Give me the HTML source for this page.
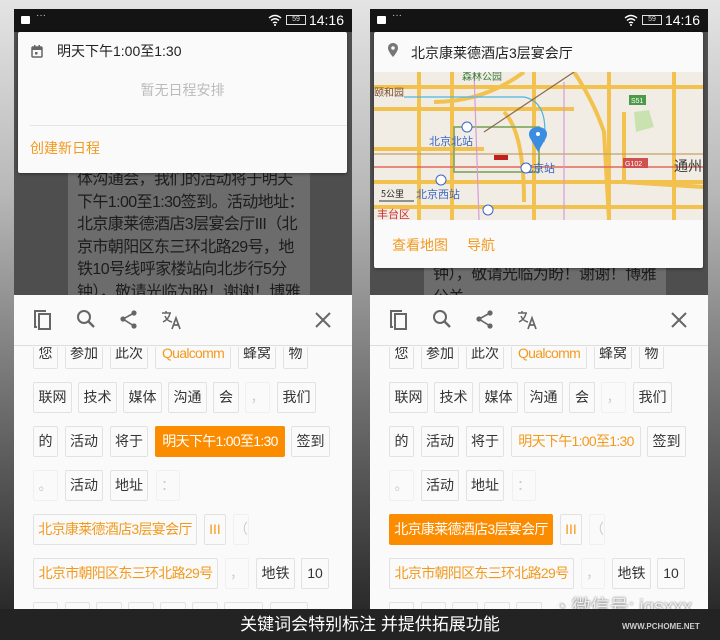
<!DOCTYPE html>
<html><head><meta charset="utf-8">
<style>
*{margin:0;padding:0;box-sizing:border-box}
body{width:720px;height:640px;overflow:hidden;position:relative;font-family:"Liberation Sans","Noto Sans CJK SC",sans-serif;background:linear-gradient(#e4e4e4 0%,#b8b8b8 30%,#6a6a6a 65%,#2a2a2a 95%,#222 100%)}
.ph{position:absolute;top:9px;width:338px;height:600px;background:#4e4e4e;overflow:hidden}
.sb{position:absolute;left:0;top:0;width:338px;height:23px;background:#141414;color:#fff}
.sb .t{position:absolute;right:8px;top:3px;font-size:14px}
.sb .bat{position:absolute;right:46px;top:6px;width:20px;height:10px;border:1px solid #ddd;font-size:7px;line-height:8px;text-align:center;color:#ddd}
.sb .ic1{position:absolute;left:7px;top:7px;width:9px;height:8px;background:#fff;border-radius:1px}
.sb .dots{position:absolute;left:22px;top:1px;font-size:10px;color:#ccc}
.bub{position:absolute;left:54px;top:40px;width:242px;height:250px;background:#6c6c6c;color:#1c1c1c;font-size:16px;line-height:22.5px;padding:0 0 0 9px;white-space:nowrap;letter-spacing:-0.6px;overflow:hidden}
.card{position:absolute;left:4px;top:23px;width:329px;background:#fafafa;box-shadow:0 1px 3px rgba(0,0,0,.4);border-radius:2px}
.sheet{position:absolute;left:0;top:286px;width:338px;height:314px;background:#fafafa}
.tb{position:absolute;left:0;top:0;width:338px;height:51px;border-bottom:1.5px solid #ddd;background:#fafafa;z-index:2}
.tb svg{position:absolute;top:14px}
.c{position:absolute;height:31px;border:1.5px solid #e2e2e2;border-radius:2px;background:#fafafa;font-size:14px;color:#333;text-align:center;line-height:28px;white-space:nowrap;overflow:hidden}
.c.f{color:#ccc;border-color:#f0f0f0}
.c.o{color:#f39a1e}
.c.on{background:#fb8c00;border-color:#fb8c00;color:#fff}
.n{letter-spacing:-0.7px}
.cap{position:absolute;left:0;top:609px;width:720px;height:31px;background:#232323;color:#fff;font-size:17px;text-align:center;line-height:31px;padding-left:20px}
.or{color:#f39a1e}
</style></head><body>

<!-- LEFT PHONE -->
<div class="ph" style="left:14px">
 <div class="sb"><div class="ic1"></div><div class="dots">···</div>
  <svg style="position:absolute;right:70px;top:5px" width="14" height="12" viewBox="0 0 14 12"><path d="M1 4 Q7 -1 13 4 M3 6.5 Q7 3 11 6.5 M5 9 Q7 7.5 9 9" stroke="#fff" stroke-width="1.4" fill="none"/><circle cx="7" cy="11" r="1" fill="#fff"/></svg>
  <div class="bat">59</div><div class="t">14:16</div></div>
 <div class="bub" style="top:40px;padding-top:120px">体沟通会，我们的活动将于明天<br>下午1:00至1:30签到。活动地址：<br>北京康莱德酒店3层宴会厅III（北<br>京市朝阳区东三环北路29号，地<br>铁10号线呼家楼站向北步行5分<br>钟），敬请光临为盼！谢谢！博雅<br>公关</div>
 <div class="card" style="height:141px">
  <svg style="position:absolute;left:13px;top:13px" width="12" height="13" viewBox="0 0 12 13"><rect x="1" y="2" width="10" height="10" rx="1" fill="none" stroke="#666" stroke-width="1.5"/><rect x="1" y="2" width="10" height="3" fill="#666"/><rect x="3" y="0" width="1.5" height="3" fill="#666"/><rect x="7.5" y="0" width="1.5" height="3" fill="#666"/><rect x="4" y="7" width="2.5" height="2.5" fill="#666"/></svg>
  <div style="position:absolute;left:39px;top:9px;font-size:14px;color:#222">明天下午1:00至1:30</div>
  <div style="position:absolute;left:0;width:329px;top:48px;text-align:center;font-size:14px;color:#bbb">暂无日程安排</div>
  <div style="position:absolute;left:12px;right:0;top:93px;height:1px;background:#e4e4e4"></div>
  <div style="position:absolute;left:12px;top:106px;font-size:14px" class="or">创建新日程</div>
 </div>
 <div class="sheet">
  <div class="tb">
   <svg style="left:19px" width="20" height="22" viewBox="0 0 20 22"><path d="M2 4 V18 H4" stroke="#666" stroke-width="2" fill="none"/><rect x="6" y="5" width="11" height="15" fill="none" stroke="#666" stroke-width="2"/><path d="M2 4 V2 H13" stroke="#666" stroke-width="2" fill="none"/></svg>
   <svg style="left:62px" width="20" height="22" viewBox="0 0 20 22"><circle cx="8" cy="8" r="6" fill="none" stroke="#666" stroke-width="2"/><path d="M12.5 12.5 L18 18" stroke="#666" stroke-width="2.4"/></svg>
   <svg style="left:105px" width="20" height="22" viewBox="0 0 20 22"><circle cx="15" cy="4" r="2.6" fill="#666"/><circle cx="4" cy="10" r="2.6" fill="#666"/><circle cx="15" cy="17" r="2.6" fill="#666"/><path d="M15 4 L4 10 L15 17" stroke="#666" stroke-width="1.6" fill="none"/></svg>
   <svg style="left:147px" width="22" height="22" viewBox="0 0 22 22"><path d="M1 4 H10 M5 2 V4 M2 13 Q8 10 9 4 M4 7 Q6 12 11 13" stroke="#666" stroke-width="1.5" fill="none"/><path d="M11 20 L15 9 L19 20 M12.5 16 H17.5" stroke="#666" stroke-width="1.7" fill="none"/></svg>
   <svg style="left:300px;top:16px" width="18" height="18" viewBox="0 0 18 18"><path d="M2 2 L16 16 M16 2 L2 16" stroke="#666" stroke-width="2"/></svg>
  </div>
  <div style="position:absolute;left:0;top:52px;width:338px;height:262px;overflow:hidden">
   <div style="position:absolute;left:0;top:-52px;width:338px;height:320px">
    <div class="c" style="left:19px;top:43px;width:25px">您</div>
    <div class="c" style="left:51px;top:43px;width:38px">参加</div>
    <div class="c" style="left:96px;top:43px;width:38px">此次</div>
    <div class="c o n" style="left:141px;top:43px;width:76px">Qualcomm</div>
    <div class="c" style="left:224px;top:43px;width:38px">蜂窝</div>
    <div class="c" style="left:269px;top:43px;width:25px">物</div>
    <div class="c" style="left:19px;top:87px;width:39px">联网</div>
    <div class="c" style="left:64px;top:87px;width:39px">技术</div>
    <div class="c" style="left:109px;top:87px;width:39px">媒体</div>
    <div class="c" style="left:154px;top:87px;width:39px">沟通</div>
    <div class="c" style="left:199px;top:87px;width:26px">会</div>
    <div class="c f" style="left:231px;top:87px;width:25px">，</div>
    <div class="c" style="left:263px;top:87px;width:39px">我们</div>
    <div class="c" style="left:19px;top:131px;width:25px">的</div>
    <div class="c" style="left:51px;top:131px;width:38px">活动</div>
    <div class="c" style="left:96px;top:131px;width:38px">将于</div>
    <div class="c on n" style="left:141px;top:131px;width:130px">明天下午1:00至1:30</div>
    <div class="c" style="left:277px;top:131px;width:39px">签到</div>
    <div class="c f" style="left:19px;top:175px;width:25px">。</div>
    <div class="c" style="left:51px;top:175px;width:38px">活动</div>
    <div class="c" style="left:96px;top:175px;width:38px">地址</div>
    <div class="c f" style="left:142px;top:175px;width:24px">：</div>
    <div class="c o n" style="left:19px;top:219px;width:164px">北京康莱德酒店3层宴会厅</div>
    <div class="c o" style="left:190px;top:219px;width:22px">III</div>
    <div class="c f" style="left:219px;top:219px;width:16px">（</div>
    <div class="c o n" style="left:19px;top:263px;width:185px">北京市朝阳区东三环北路29号</div>
    <div class="c f" style="left:211px;top:263px;width:24px">，</div>
    <div class="c" style="left:242px;top:263px;width:39px">地铁</div>
    <div class="c" style="left:287px;top:263px;width:28px">10</div>
    <div class="c" style="left:19px;top:307px;width:25px"></div><div class="c" style="left:51px;top:307px;width:25px"></div><div class="c" style="left:82px;top:307px;width:26px"></div><div class="c" style="left:114px;top:307px;width:26px"></div><div class="c" style="left:146px;top:307px;width:26px"></div><div class="c" style="left:178px;top:307px;width:26px"></div><div class="c" style="left:210px;top:307px;width:39px"></div><div class="c" style="left:256px;top:307px;width:38px"></div>
   </div>
  </div>
 </div>
</div>

<!-- RIGHT PHONE -->
<div class="ph" style="left:370px">
 <div class="sb"><div class="ic1"></div><div class="dots">···</div>
  <svg style="position:absolute;right:70px;top:5px" width="14" height="12" viewBox="0 0 14 12"><path d="M1 4 Q7 -1 13 4 M3 6.5 Q7 3 11 6.5 M5 9 Q7 7.5 9 9" stroke="#fff" stroke-width="1.4" fill="none"/><circle cx="7" cy="11" r="1" fill="#fff"/></svg>
  <div class="bat">59</div><div class="t">14:16</div></div>
 <div class="bub" style="top:40px;padding-top:215px">钟），敬请光临为盼！谢谢！博雅<br>公关</div>
 <div class="card" style="height:236px">
  <svg style="position:absolute;left:14px;top:11px" width="10" height="14" viewBox="0 0 10 14"><path d="M5 0 C2 0 0 2.2 0 5 C0 8.5 5 14 5 14 C5 14 10 8.5 10 5 C10 2.2 8 0 5 0 Z" fill="#777"/><circle cx="5" cy="5" r="1.8" fill="#fafafa"/></svg>
  <div style="position:absolute;left:37px;top:11px;font-size:14px;color:#222">北京康莱德酒店3层宴会厅</div>
  <svg style="position:absolute;left:0;top:40px" width="329" height="148" viewBox="0 0 329 148">
   <rect width="329" height="148" fill="#f1ede4"/>
   <path d="M260 40 L275 38 L280 55 L262 60 Z" fill="#c9e2b0"/>
   <g stroke="#f2c14e" stroke-width="4" fill="none">
    <path d="M0 15 H329"/><path d="M0 37 H200"/><path d="M0 77 H110"/><path d="M0 110 H329"/><path d="M0 135 H329"/>
    <path d="M45 0 V148"/><path d="M78 0 V148"/><path d="M160 0 V148"/><path d="M235 0 V148"/><path d="M300 0 V148"/>
    <path d="M150 0 Q110 30 60 30"/><path d="M200 0 Q220 30 230 60 L235 148"/>
    <path d="M130 40 Q150 60 150 130"/><path d="M250 40 V110 L330 115"/>
   </g>
   <path d="M0 95 H329" stroke="#e0685a" stroke-width="1.5"/>
   <path d="M0 82 H329" stroke="#c8a06a" stroke-width="1.2"/>
   <path d="M80 55 H165 V100 H80 Z" stroke="#88aa66" stroke-width="1.8" fill="none"/>
   <path d="M30 25 H150 Q175 30 170 70" stroke="#4bb7e0" stroke-width="1.2" fill="none"/>
   <path d="M100 0 L105 148 M190 10 V148" stroke="#d89bd6" stroke-width="1.2"/>
   <path d="M110 60 L200 0" stroke="#8a6a4a" stroke-width="1.2"/>
   <rect x="255" y="23" width="17" height="10" fill="#4a9a4a"/><text x="257" y="31" font-size="7" fill="#fff" font-family="Liberation Sans">S51</text>
   <rect x="249" y="86" width="25" height="10" fill="#d05050"/><text x="251" y="94" font-size="7" fill="#fff" font-family="Liberation Sans">G102</text>
   <text x="88" y="8" font-size="10" fill="#3a7a3a" font-family="Noto Sans CJK SC">森林公园</text>
   <text x="0" y="24" font-size="10" fill="#7a4a2a" font-family="Noto Sans CJK SC">颐和园</text>
   <text x="55" y="73" font-size="11" fill="#3a66c8" font-family="Noto Sans CJK SC">北京北站</text>
   <text x="148" y="100" font-size="11" fill="#3a66c8" font-family="Noto Sans CJK SC">北京站</text>
   <text x="42" y="126" font-size="11" fill="#3a66c8" font-family="Noto Sans CJK SC">北京西站</text>
   <text x="300" y="99" font-size="14" fill="#333" font-family="Noto Sans CJK SC">通州</text>
   <text x="7" y="125" font-size="9" fill="#222" font-family="Noto Sans CJK SC">5公里</text>
   <path d="M5 129 H40" stroke="#333" stroke-width="1"/>
   <text x="3" y="146" font-size="11" fill="#d03030" font-family="Noto Sans CJK SC">丰台区</text>
   <rect x="120" y="83" width="14" height="5" fill="#c02020"/>
   <circle cx="93" cy="55" r="5" fill="#fff" stroke="#3a66c8"/><circle cx="152" cy="96" r="5" fill="#fff" stroke="#3a66c8"/><circle cx="67" cy="108" r="5" fill="#fff" stroke="#3a66c8"/><circle cx="114" cy="138" r="5" fill="#fff" stroke="#3a66c8"/>
   <path d="M164 55 C157 55 153 60 156 66 L164 80 L172 66 C175 60 171 55 164 55 Z" fill="#3a8de0"/><circle cx="164" cy="62" r="2" fill="#fff"/>
  </svg>
  <div style="position:absolute;left:18px;top:203px;font-size:14px" class="or">查看地图</div>
  <div style="position:absolute;left:93px;top:203px;font-size:14px" class="or">导航</div>
 </div>
 <div class="sheet">
  <div class="tb">
   <svg style="left:19px" width="20" height="22" viewBox="0 0 20 22"><path d="M2 4 V18 H4" stroke="#666" stroke-width="2" fill="none"/><rect x="6" y="5" width="11" height="15" fill="none" stroke="#666" stroke-width="2"/><path d="M2 4 V2 H13" stroke="#666" stroke-width="2" fill="none"/></svg>
   <svg style="left:62px" width="20" height="22" viewBox="0 0 20 22"><circle cx="8" cy="8" r="6" fill="none" stroke="#666" stroke-width="2"/><path d="M12.5 12.5 L18 18" stroke="#666" stroke-width="2.4"/></svg>
   <svg style="left:105px" width="20" height="22" viewBox="0 0 20 22"><circle cx="15" cy="4" r="2.6" fill="#666"/><circle cx="4" cy="10" r="2.6" fill="#666"/><circle cx="15" cy="17" r="2.6" fill="#666"/><path d="M15 4 L4 10 L15 17" stroke="#666" stroke-width="1.6" fill="none"/></svg>
   <svg style="left:147px" width="22" height="22" viewBox="0 0 22 22"><path d="M1 4 H10 M5 2 V4 M2 13 Q8 10 9 4 M4 7 Q6 12 11 13" stroke="#666" stroke-width="1.5" fill="none"/><path d="M11 20 L15 9 L19 20 M12.5 16 H17.5" stroke="#666" stroke-width="1.7" fill="none"/></svg>
   <svg style="left:300px;top:16px" width="18" height="18" viewBox="0 0 18 18"><path d="M2 2 L16 16 M16 2 L2 16" stroke="#666" stroke-width="2"/></svg>
  </div>
  <div style="position:absolute;left:0;top:52px;width:338px;height:262px;overflow:hidden">
   <div style="position:absolute;left:0;top:-52px;width:338px;height:320px">
    <div class="c" style="left:19px;top:43px;width:25px">您</div>
    <div class="c" style="left:51px;top:43px;width:38px">参加</div>
    <div class="c" style="left:96px;top:43px;width:38px">此次</div>
    <div class="c o n" style="left:141px;top:43px;width:76px">Qualcomm</div>
    <div class="c" style="left:224px;top:43px;width:38px">蜂窝</div>
    <div class="c" style="left:269px;top:43px;width:25px">物</div>
    <div class="c" style="left:19px;top:87px;width:39px">联网</div>
    <div class="c" style="left:64px;top:87px;width:39px">技术</div>
    <div class="c" style="left:109px;top:87px;width:39px">媒体</div>
    <div class="c" style="left:154px;top:87px;width:39px">沟通</div>
    <div class="c" style="left:199px;top:87px;width:26px">会</div>
    <div class="c f" style="left:231px;top:87px;width:25px">，</div>
    <div class="c" style="left:263px;top:87px;width:39px">我们</div>
    <div class="c" style="left:19px;top:131px;width:25px">的</div>
    <div class="c" style="left:51px;top:131px;width:38px">活动</div>
    <div class="c" style="left:96px;top:131px;width:38px">将于</div>
    <div class="c o n" style="left:141px;top:131px;width:130px">明天下午1:00至1:30</div>
    <div class="c" style="left:277px;top:131px;width:39px">签到</div>
    <div class="c f" style="left:19px;top:175px;width:25px">。</div>
    <div class="c" style="left:51px;top:175px;width:38px">活动</div>
    <div class="c" style="left:96px;top:175px;width:38px">地址</div>
    <div class="c f" style="left:142px;top:175px;width:24px">：</div>
    <div class="c on n" style="left:19px;top:219px;width:164px">北京康莱德酒店3层宴会厅</div>
    <div class="c o" style="left:190px;top:219px;width:22px">III</div>
    <div class="c f" style="left:219px;top:219px;width:16px">（</div>
    <div class="c o n" style="left:19px;top:263px;width:185px">北京市朝阳区东三环北路29号</div>
    <div class="c f" style="left:211px;top:263px;width:24px">，</div>
    <div class="c" style="left:242px;top:263px;width:39px">地铁</div>
    <div class="c" style="left:287px;top:263px;width:28px">10</div>
    <div class="c" style="left:19px;top:307px;width:25px"></div><div class="c" style="left:51px;top:307px;width:25px"></div><div class="c" style="left:82px;top:307px;width:26px"></div><div class="c" style="left:114px;top:307px;width:26px"></div><div class="c" style="left:146px;top:307px;width:26px"></div>
   </div>
  </div>
 </div>
 <div style="position:absolute;left:185px;top:583px;font-size:19px;color:#eee;text-shadow:0 0 2px #555">◔ 微信号: jqsxxx</div>
</div>

<div class="cap">关键词会特别标注 并提供拓展功能</div>
<div style="position:absolute;left:622px;top:622px;font-size:8px;color:#ccc;font-weight:bold">WWW.PCHOME.NET</div>
</body></html>
